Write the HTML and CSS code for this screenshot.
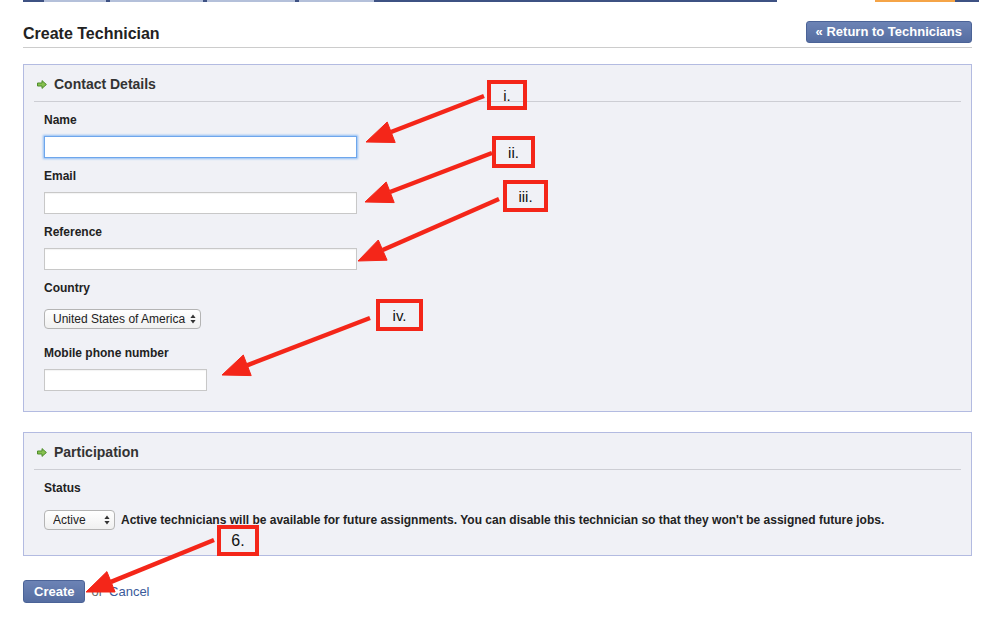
FILE: index.html
```html
<!DOCTYPE html>
<html lang="en">
<head>
<meta charset="utf-8">
<title>Create Technician</title>
<link rel="stylesheet" href="styles.css">
</head>
<body>
<div class="page">
  <div class="topnav">
    <span class="seg dark s1"></span><span class="seg light s2"></span><span class="seg dark s3"></span><span class="seg light s4"></span><span class="seg dark s3"></span><span class="seg light s5"></span><span class="seg dark s3"></span><span class="seg light s6"></span><span class="seg dark s7"></span><span class="seg blank s8"></span><span class="seg orange s9"></span><span class="seg dark s10"></span>
  </div>

  <div class="content">
    <div class="header">
      <h1>Create Technician</h1>
      <a class="btn-return" href="#">« Return to Technicians</a>
    </div>

    <div class="panel">
      <div class="panel-title">
        <svg class="go-icon" width="10" height="9" viewBox="0 0 10 9"><path d="M0.5 3 H5 V0.6 L9.4 4.5 L5 8.4 V6 H0.5 Z" fill="#86c04f" stroke="#4f8d2c" stroke-width="1" stroke-linejoin="round"/></svg>
        <span>Contact Details</span>
      </div>
      <div class="fields">
        <div class="field">
          <label>Name</label>
          <input class="text-input focused" type="text">
        </div>
        <div class="field">
          <label>Email</label>
          <input class="text-input" type="text">
        </div>
        <div class="field">
          <label>Reference</label>
          <input class="text-input" type="text">
        </div>
        <div class="field">
          <label>Country</label>
          <span class="select-wrap country">
            <select class="select"><option>United States of America</option></select>
            <svg class="select-arrows" width="6" height="10" viewBox="0 0 6 10"><path d="M3 0.5 L5.6 4 H0.4 Z M3 9.5 L5.6 6 H0.4 Z" fill="#333"/></svg>
          </span>
        </div>
        <div class="field">
          <label>Mobile phone number</label>
          <input class="text-input short" type="text">
        </div>
      </div>
    </div>

    <div class="panel second">
      <div class="panel-title">
        <svg class="go-icon" width="10" height="9" viewBox="0 0 10 9"><path d="M0.5 3 H5 V0.6 L9.4 4.5 L5 8.4 V6 H0.5 Z" fill="#86c04f" stroke="#4f8d2c" stroke-width="1" stroke-linejoin="round"/></svg>
        <span>Participation</span>
      </div>
      <div class="fields">
        <div class="field">
          <label>Status</label>
          <div class="status-row">
            <span class="select-wrap status">
              <select class="select"><option>Active</option></select>
              <svg class="select-arrows" width="6" height="10" viewBox="0 0 6 10"><path d="M3 0.5 L5.6 4 H0.4 Z M3 9.5 L5.6 6 H0.4 Z" fill="#333"/></svg>
            </span>
            <span class="help">Active technicians will be available for future assignments. You can disable this technician so that they won't be assigned future jobs.</span>
          </div>
        </div>
      </div>
    </div>

    <div class="actions">
      <button class="btn-create" type="button">Create</button>
      <span class="or">or</span>
      <a class="cancel" href="#">Cancel</a>
    </div>
  </div>

  <svg class="annotations" width="999" height="619" viewBox="0 0 999 619">
    <g fill="#f42619" stroke="#f42619">
      <line x1="484" y1="96" x2="391" y2="132" stroke-width="4.5"/>
      <polygon points="366,142 387.2,122 395.2,142.5" stroke-width="1"/>
      <line x1="492" y1="153" x2="390" y2="192" stroke-width="4.5"/>
      <polygon points="365,202 386.2,182 394.2,202.6" stroke-width="1"/>
      <line x1="499" y1="199" x2="382.7" y2="250" stroke-width="4.5"/>
      <polygon points="358,261 378.3,240 387.1,260.2" stroke-width="1"/>
      <line x1="370" y1="318" x2="247" y2="365.3" stroke-width="4.5"/>
      <polygon points="222,375 243.3,355 251.2,375.6" stroke-width="1"/>
      <line x1="214" y1="540" x2="111" y2="581.8" stroke-width="4.5"/>
      <polygon points="86,592 106.9,571.6 115.1,592" stroke-width="1"/>
    </g>
  </svg>

  <div class="note n1">i.</div>
  <div class="note n2">ii.</div>
  <div class="note n3">iii.</div>
  <div class="note n4">iv.</div>
  <div class="note n6">6.</div>
</div>
</body>
</html>
```

FILE: styles.css
```css
* { box-sizing: border-box; }

body {
  margin: 0;
  background: #fff;
  color: #222;
  font-family: "Liberation Sans", Arial, Helvetica, sans-serif;
}

.page {
  position: relative;
  width: 999px;
  height: 619px;
  overflow: hidden;
}

/* top navigation remnant */
.topnav {
  display: flex;
  height: 2px;
  margin-left: 23px;
}
.seg { display: block; height: 2px; }
.dark { background: #3e5283; }
.light { background: #b4c0da; }
.orange { background: #f5a447; }
.blank { background: #fff; }
.s1 { width: 21px; }
.s2 { width: 62px; }
.s3 { width: 4px; }
.s4 { width: 93px; }
.s5 { width: 88px; }
.s6 { width: 75px; }
.s7 { width: 403px; }
.s8 { width: 98px; }
.s9 { width: 80px; }
.s10 { width: 24px; }

.content {
  margin: 0 27px 0 23px;
}

.header {
  display: flex;
  justify-content: space-between;
  align-items: flex-start;
  margin-top: 19px;
  padding-bottom: 2px;
  border-bottom: 1px solid #cccccc;
}

h1 {
  margin: 2px 0 0;
  font-size: 16px;
  line-height: 22px;
  font-weight: bold;
  color: #222;
}

.btn-return {
  display: block;
  height: 22px;
  padding: 0 9px;
  border: 1px solid #4b6397;
  border-radius: 3px;
  background: linear-gradient(#6c83b5, #556da1);
  color: #fff;
  font-size: 13px;
  font-weight: bold;
  line-height: 20px;
  text-decoration: none;
  white-space: nowrap;
}

.panel {
  margin-top: 16px;
  border: 1px solid #b3bbe1;
  background: #f0f1f6;
  padding: 0 10px 9px;
}
.panel.second { margin-top: 20px; }

.panel-title {
  display: flex;
  align-items: center;
  gap: 7px;
  padding: 11px 3px 8px;
  border-bottom: 1px solid #cdced4;
  font-size: 14px;
  line-height: 17px;
  font-weight: bold;
  color: #333;
}
.go-icon { display: block; flex: none; }

.fields {
  padding: 11px 10px 0;
}

.field {
  margin-bottom: 11px;
}

.field label {
  display: block;
  margin-bottom: 9px;
  font-size: 12px;
  line-height: 14px;
  font-weight: bold;
  color: #222;
}

.text-input {
  display: block;
  width: 313px;
  height: 22px;
  margin: 0;
  padding: 2px 4px;
  border: 1px solid #c8c8c8;
  background: #fff;
  box-shadow: inset 0 1px 1px rgba(0, 0, 0, 0.05);
  font: 12px "Liberation Sans", Arial, sans-serif;
  outline: none;
}
.text-input.short { width: 163px; }
.text-input.focused {
  border-color: #6ea6ec;
  box-shadow: 0 0 2px 1px #8fbdf5;
}

.select-wrap {
  position: relative;
  display: inline-block;
  vertical-align: top;
}
.select-wrap.country { margin: 5px 0 6px; }

.select {
  display: block;
  height: 20px;
  margin: 0;
  padding: 0 12px 0 8px;
  -webkit-appearance: none;
  appearance: none;
  border: 1px solid #b4b4b4;
  border-radius: 4px;
  background: linear-gradient(#ffffff, #f0f0f0);
  color: #222;
  font: 12px/18px "Liberation Sans", Arial, sans-serif;
  outline: none;
}
.country .select { width: 157px; }
.status .select { width: 71px; }

.select-arrows {
  position: absolute;
  right: 5px;
  top: 5px;
  pointer-events: none;
}

.status-row {
  display: flex;
  align-items: center;
  gap: 6px;
  margin-top: 15px;
  margin-bottom: 16px;
}

.help {
  font-size: 12px;
  font-weight: bold;
  color: #222;
  white-space: nowrap;
}

.actions {
  display: flex;
  align-items: center;
  margin-top: 24px;
}

.btn-create {
  height: 23px;
  margin: 0;
  padding: 0 10px;
  border: 1px solid #4b6397;
  border-radius: 3px;
  background: linear-gradient(#6c83b5, #556da1);
  color: #fff;
  font: bold 13px/21px "Liberation Sans", Arial, sans-serif;
}

.or {
  margin: 0 6px;
  font-size: 13px;
  color: #666;
}

.cancel {
  font-size: 13px;
  color: #3b5a9a;
  text-decoration: none;
}

/* annotation overlay */
.annotations {
  position: absolute;
  left: 0;
  top: 0;
  pointer-events: none;
}

.note {
  position: absolute;
  display: flex;
  align-items: center;
  justify-content: center;
  border: 4px solid #f42619;
  color: #111;
  font-size: 15px;
  font-family: "Liberation Sans", Arial, sans-serif;
}
.n1 { left: 487px; top: 80px; width: 40px; height: 30px; }
.n2 { left: 492px; top: 136px; width: 43px; height: 32px; }
.n3 { left: 503px; top: 180px; width: 45px; height: 32px; }
.n4 { left: 376px; top: 299px; width: 47px; height: 32px; }
.n6 { left: 217px; top: 525px; width: 42px; height: 31px; font-size: 16px; }
```
